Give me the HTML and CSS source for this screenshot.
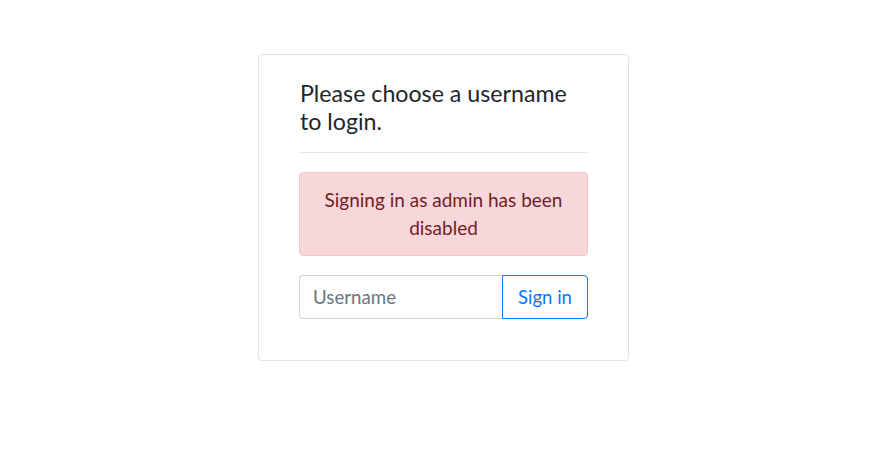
FILE: index.html
```html
<!DOCTYPE html>
<html lang="en">
<head>
<meta charset="utf-8">
<title>Login</title>
<link rel="stylesheet" href="styles.css">
</head>
<body>
<main class="page">
  <section class="card">
    <h4 class="title">Please choose a username to login.</h4>
    <hr class="divider">
    <div class="alert">Signing in as admin has been disabled</div>
    <form class="login-form">
      <div class="input-group">
        <input class="field" type="text" placeholder="Username">
        <button class="btn" type="button">Sign in</button>
      </div>
    </form>
  </section>
</main>
</body>
</html>
```
FILE: styles.css
```css
* { box-sizing: border-box; }
html, body { margin: 0; padding: 0; background: #fff; }
body {
  font-family: Lato, "Open Sans", "Noto Sans", sans-serif;
  color: #212529;
  font-size: 18px;
}
.page {
  display: flex;
  justify-content: center;
  padding-top: 54px;
  padding-left: 2px;
}
.card {
  width: 371px;
  border: 1px solid #e0e0e0;
  border-radius: 4px;
  padding: 24px 40px 41px;
}
.title {
  margin: 0;
  font-size: 23.2px;
  font-weight: 400;
  line-height: 28px;
  padding-left: 1px;
}
.divider {
  margin: 17px 0 19px;
  border: 0;
  border-top: 1px solid rgba(0,0,0,0.1);
}
.alert {
  background: #f8d7da;
  border: 1px solid #f5c6cb;
  color: #721c24;
  border-radius: 4px;
  padding: 13px 20px;
  text-align: center;
  line-height: 28px;
  font-size: 19px;
  margin-bottom: 19px;
}
.login-form { margin: 0; }
.input-group {
  display: flex;
  height: 44px;
}
.field {
  flex: 1;
  min-width: 0;
  font: inherit;
  font-size: 18.7px;
  color: #495057;
  border: 1px solid #ced4da;
  border-right: 0;
  border-radius: 4px 0 0 4px;
  padding: 0 13px;
  outline: none;
}
.field::placeholder { color: #6c757d; }
.btn {
  width: 86px;
  font: inherit;
  font-size: 18.5px;
  color: #007bff;
  background: #fff;
  border: 1px solid #007bff;
  border-radius: 0 4px 4px 0;
  padding: 0 12px;
}
```
